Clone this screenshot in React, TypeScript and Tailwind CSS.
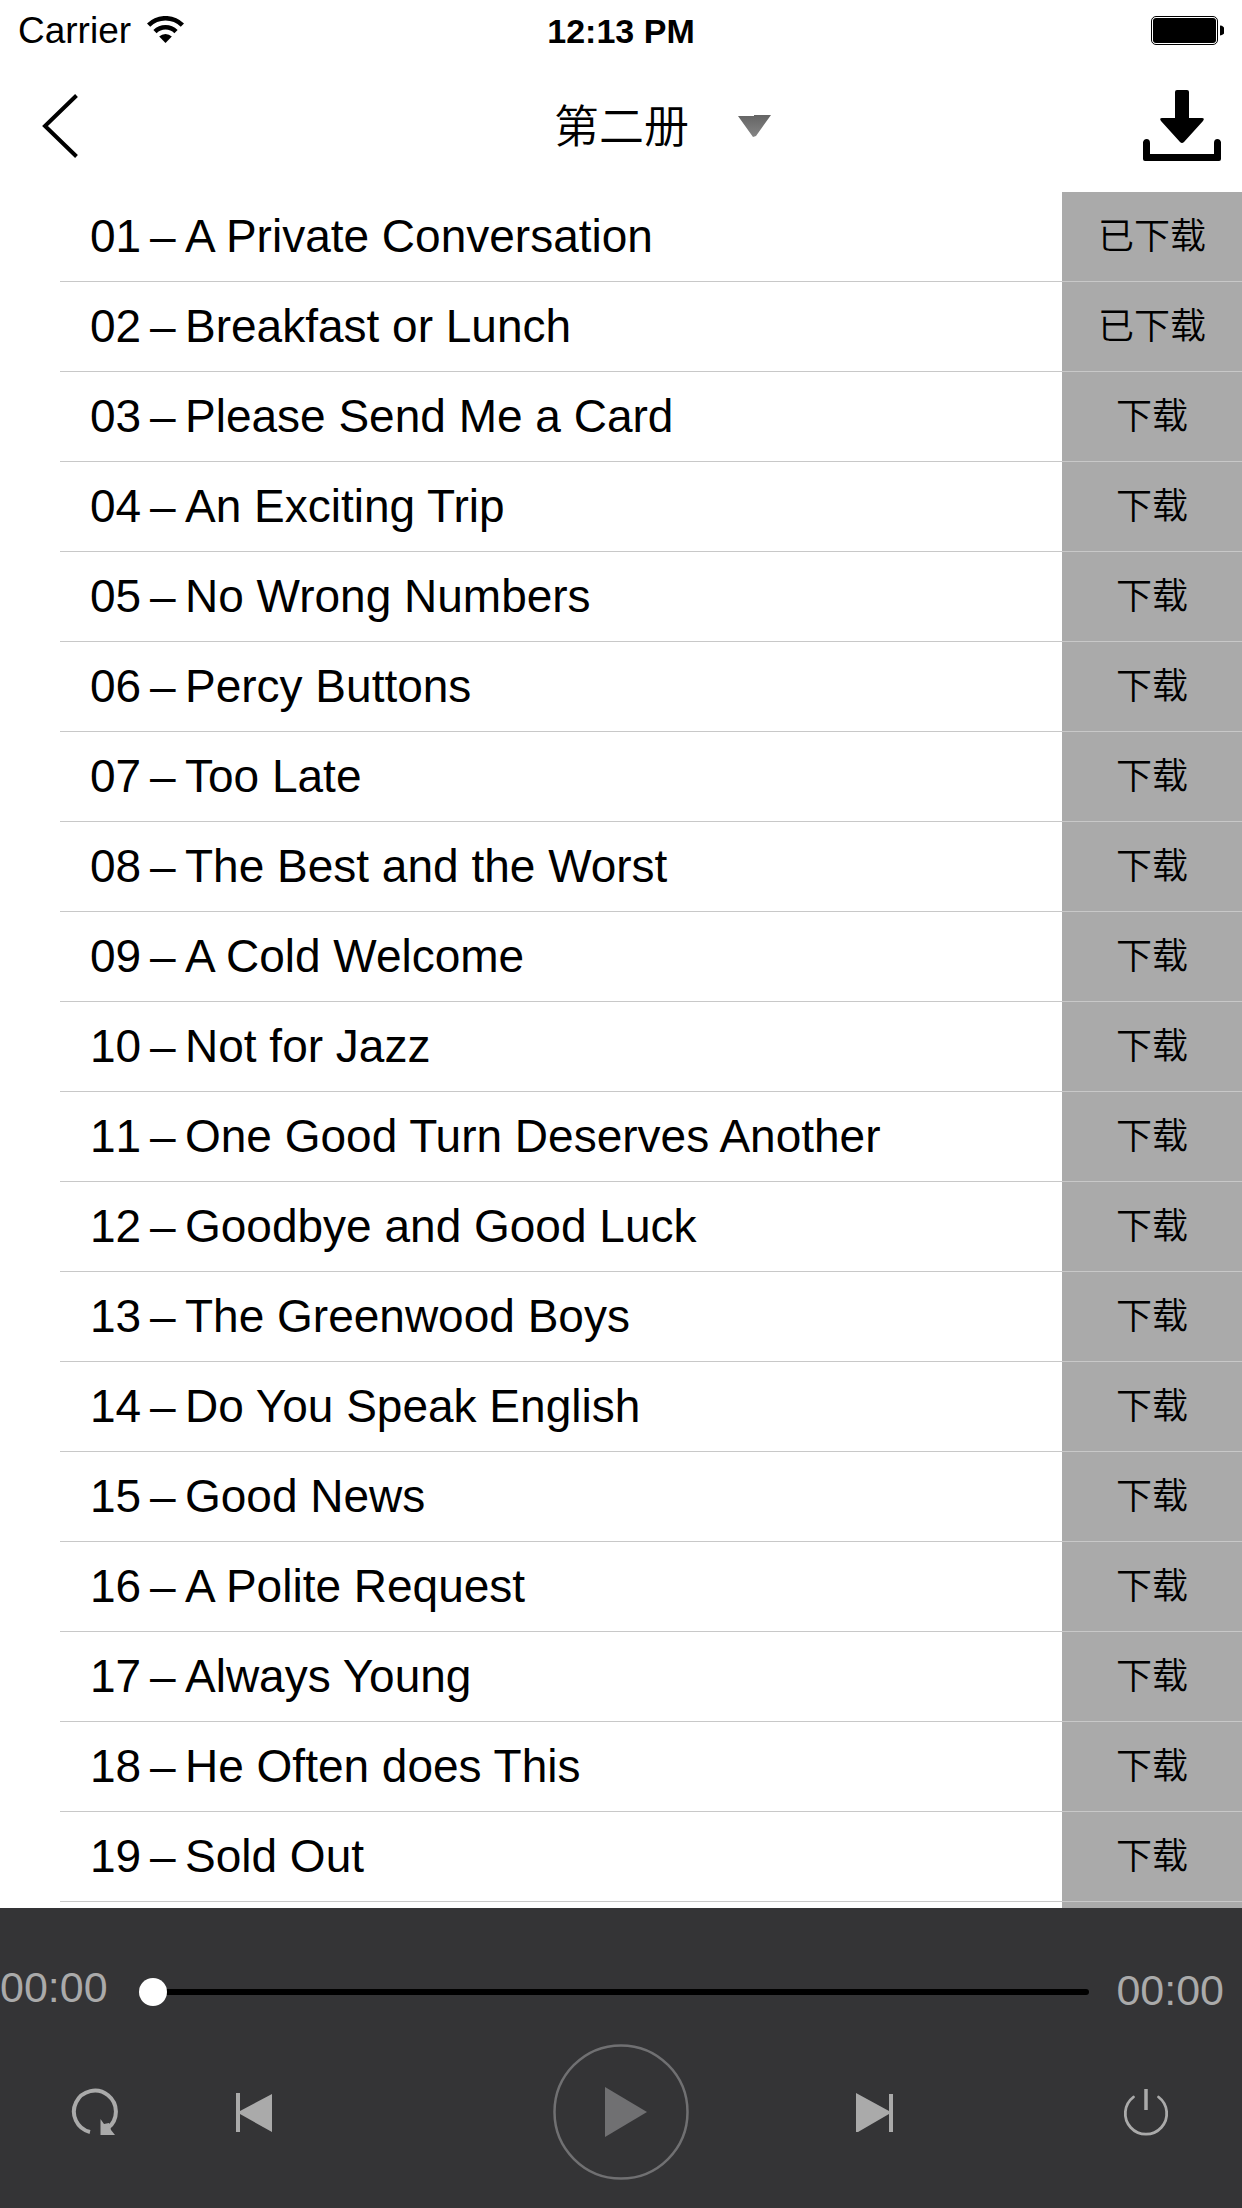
import { useState } from "react";

const titles = [
  "A Private Conversation",
  "Breakfast or Lunch",
  "Please Send Me a Card",
  "An Exciting Trip",
  "No Wrong Numbers",
  "Percy Buttons",
  "Too Late",
  "The Best and the Worst",
  "A Cold Welcome",
  "Not for Jazz",
  "One Good Turn Deserves Another",
  "Goodbye and Good Luck",
  "The Greenwood Boys",
  "Do You Speak English",
  "Good News",
  "A Polite Request",
  "Always Young",
  "He Often does This",
  "Sold Out",
];

const downloadedCount = 2;

function StatusBar() {
  return (
    <div className="grid h-[60px] grid-cols-[1fr_auto_1fr] items-center pt-0.5 pr-[18px] pl-[18px] text-[37px] leading-[58px]">
      <div className="flex items-center gap-4">
        <span>Carrier</span>
        <svg className="mb-1 h-[27px] w-[37px]" viewBox="0 0 37 27" aria-hidden="true">
          <g fill="none" stroke="#000" strokeWidth="4.6">
            <path d="M1.6 9.2A24 24 0 0 1 35.4 9.2" />
            <path d="M8 15.6A15 15 0 0 1 29 15.6" />
          </g>
          <path d="M12.2 20.6A9 9 0 0 1 24.8 20.6L18.5 27Z" />
        </svg>
      </div>
      <span className="text-[34px] font-bold">12:13 PM</span>
      <svg className="mb-0.5 h-[29px] w-[73px] justify-self-end" viewBox="0 0 73 29" aria-hidden="true">
        <rect x="0.5" y="0.5" width="66" height="28" rx="4.5" fill="#fff" stroke="#000" />
        <rect x="2" y="2" width="63" height="25" rx="3" />
        <path d="M69 9.5A5 5 0 0 1 69 19.5Z" />
      </svg>
    </div>
  );
}

function Header() {
  return (
    <header className="grid h-[132px] grid-cols-[1fr_auto_1fr] items-center pr-[21px] pl-[42px]">
      <button type="button" aria-label="返回" className="justify-self-start">
        <svg className="h-[66px] w-9" viewBox="0 0 36 66" fill="none" stroke="#000" strokeWidth="4">
          <path d="M34.5 2.5L3 33L34.5 63.5" />
        </svg>
      </button>
      <button type="button" className="ml-[62px] flex items-center gap-[49px] text-[45px]">
        <span className="pt-1 font-[350]">第二册</span>
        <svg className="h-[22px] w-[33px]" viewBox="0 0 33 22" aria-hidden="true">
          <defs>
            <linearGradient id="caret" x1="0" y1="0" x2="0" y2="1">
              <stop offset="0" stopColor="#646464" />
              <stop offset="1" stopColor="#858585" />
            </linearGradient>
          </defs>
          <path d="M0 1L16 1L16 0H33L18 21L15 22Z" fill="url(#caret)" />
        </svg>
      </button>
      <button type="button" aria-label="全部下载" className="mb-0.5 justify-self-end">
        <svg className="h-[71px] w-[78px]" viewBox="0 0 78 71" aria-hidden="true">
          <path d="M34 0H44Q46 0 46 2V28H59Q62 28 60 31L41 52Q39 54 37 52L18 31Q16 28 19 28H32V2Q32 0 34 0Z" />
          <path d="M0 52Q1 49 3.5 49Q7 49 7 53V64H71V53Q71 49 74.5 49Q77 49 78 52V69Q78 71 76 71H2Q0 71 0 69Z" />
        </svg>
      </button>
    </header>
  );
}

function Lessons() {
  return (
    <ul className="min-h-0 flex-1 overflow-hidden">
      {titles.map((title, i) => (
        <li key={title} className="flex h-[90px]">
          <a
            href={"#lesson-" + (i + 1)}
            className="ml-[60px] flex flex-1 items-center border-b border-[#c8c8c8] pl-[30px] text-[46px]"
          >
            <span className="w-[60px] [font-kerning:none]">{String(i + 1).padStart(2, "0")}</span>
            <span className="w-[35px]">–</span>
            <span>{title}</span>
          </a>
          <button
            type="button"
            className="w-[180px] border-b border-[#c8c8c8] bg-[#aaaaaa] text-[36px] font-[350]"
          >
            {i < downloadedCount ? "已下载" : "下载"}
          </button>
        </li>
      ))}
      <li className="flex h-[90px]" aria-hidden="true">
        <div className="flex-1" />
        <div className="w-[180px] bg-[#aaaaaa]" />
      </li>
    </ul>
  );
}

function Player() {
  const [position, setPosition] = useState(0);
  return (
    <footer className="h-[300px] bg-[#343436] text-[#aaaaaa]">
      <div className="flex h-[168px] items-center pr-[18px] text-[43px]">
        <span className="pb-2.5">00:00</span>
        <input
          type="range"
          aria-label="播放进度"
          min={0}
          max={100}
          value={position}
          onChange={(e) => setPosition(Number(e.target.value))}
          className="mr-[27px] ml-[31px] h-7 min-w-0 flex-1 appearance-none bg-transparent [&::-webkit-slider-runnable-track]:h-1.5 [&::-webkit-slider-runnable-track]:rounded-full [&::-webkit-slider-runnable-track]:bg-black [&::-webkit-slider-thumb]:-mt-[11px] [&::-webkit-slider-thumb]:size-7 [&::-webkit-slider-thumb]:appearance-none [&::-webkit-slider-thumb]:rounded-full [&::-webkit-slider-thumb]:bg-white"
        />
        <span className="pb-1">00:00</span>
      </div>
      <div className="-mt-8 grid h-[136px] grid-cols-[1fr_auto_1fr] items-center">
        <div className="flex items-center gap-[118px] pl-[70px]">
          <button type="button" aria-label="循环">
            <svg className="size-12" viewBox="0 0 48 48" aria-hidden="true">
              <path d="M20 44A21 21 0 1 1 38 40" fill="none" stroke="#aaaaaa" strokeWidth="4" />
              <path d="M30.5 31L34 36L39 35L41 42L45 47H30.5Z" fill="#aaaaaa" />
            </svg>
          </button>
          <button type="button" aria-label="上一课">
            <svg className="h-[39px] w-9" viewBox="0 0 36 39" fill="#aaaaaa">
              <path d="M0 0H4V18L36 1V39L4 21V39H0Z" />
            </svg>
          </button>
        </div>
        <button type="button" aria-label="播放">
          <svg className="size-[136px]" viewBox="0 0 136 136">
            <circle cx="68" cy="68" r="66.5" fill="none" stroke="#707072" strokeWidth="2.5" />
            <path d="M52 43L94 68L52 93Z" fill="#707072" />
          </svg>
        </button>
        <div className="flex items-center justify-between pr-[72px] pl-[167px]">
          <button type="button" aria-label="下一课">
            <svg className="h-[39px] w-[37px]" viewBox="0 0 37 39" fill="#aaaaaa">
              <path d="M0 0L33 18V1H37V39H33V21L2 39H0Z" />
            </svg>
          </button>
          <button type="button" aria-label="定时关闭">
            <svg className="size-12" viewBox="0 0 48 48" fill="none" stroke="#aaaaaa" strokeLinecap="round">
              <path d="M11.5 9A20.7 20.7 0 1 0 36.5 9" strokeWidth="2.8" />
              <path d="M24 1V22" strokeWidth="3.5" strokeLinecap="butt" />
            </svg>
          </button>
        </div>
      </div>
    </footer>
  );
}

export default function App() {
  return (
    <div className="flex h-screen flex-col bg-white font-['Liberation_Sans','Noto_Sans_CJK_SC',sans-serif] text-black">
      <StatusBar />
      <Header />
      <Lessons />
      <Player />
    </div>
  );
}
